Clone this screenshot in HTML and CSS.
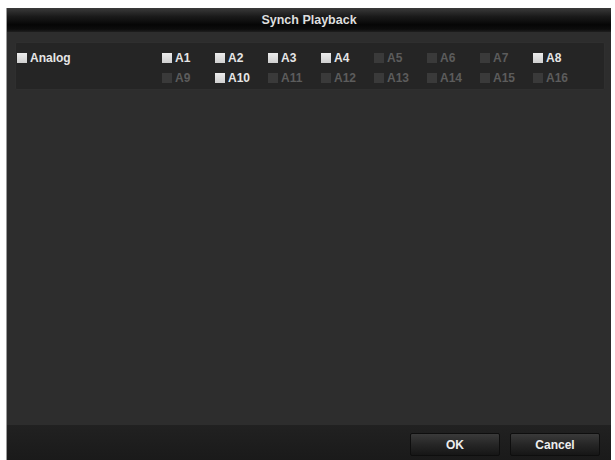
FILE: index.html
```html
<!DOCTYPE html>
<html>
<head>
<meta charset="utf-8">
<link rel="stylesheet" href="styles.css">
</head>
<body>
<div class="dialog">
  <div class="titlebar">Synch Playback</div>
  <div class="content">
    <div class="panel">
      <div class="group">
        <span class="cb on"></span><span class="lbl on">Analog</span>
      </div>
      <div class="grid">
        <div class="item"><span class="cb on"></span><span class="lbl on">A1</span></div>
        <div class="item"><span class="cb on"></span><span class="lbl on">A2</span></div>
        <div class="item"><span class="cb on"></span><span class="lbl on">A3</span></div>
        <div class="item"><span class="cb on"></span><span class="lbl on">A4</span></div>
        <div class="item"><span class="cb"></span><span class="lbl">A5</span></div>
        <div class="item"><span class="cb"></span><span class="lbl">A6</span></div>
        <div class="item"><span class="cb"></span><span class="lbl">A7</span></div>
        <div class="item"><span class="cb on"></span><span class="lbl on">A8</span></div>
        <div class="item"><span class="cb"></span><span class="lbl">A9</span></div>
        <div class="item"><span class="cb on"></span><span class="lbl on">A10</span></div>
        <div class="item"><span class="cb"></span><span class="lbl">A11</span></div>
        <div class="item"><span class="cb"></span><span class="lbl">A12</span></div>
        <div class="item"><span class="cb"></span><span class="lbl">A13</span></div>
        <div class="item"><span class="cb"></span><span class="lbl">A14</span></div>
        <div class="item"><span class="cb"></span><span class="lbl">A15</span></div>
        <div class="item"><span class="cb"></span><span class="lbl">A16</span></div>
      </div>
    </div>
  </div>
  <div class="footer">
    <button class="btn">OK</button>
    <button class="btn">Cancel</button>
  </div>
</div>
</body>
</html>
```
FILE: styles.css
```css
html, body {
  margin: 0;
  padding: 0;
  background: #ffffff;
}
body {
  font-family: "Liberation Sans", Arial, sans-serif;
  font-weight: bold;
  width: 615px;
  height: 460px;
  overflow: hidden;
}
.dialog {
  margin: 8px 0 0 7px;
  width: 604px;
  height: 452px;
  background: #2d2d2d;
  display: flex;
  flex-direction: column;
  box-shadow: -1px 0 0 #9a9a9a;
}
.titlebar {
  height: 24px;
  flex: none;
  display: flex;
  align-items: center;
  justify-content: center;
  color: #dedede;
  font-size: 12.5px;
  background: linear-gradient(#3a3a3a 0%, #1a1a1a 35%, #060606 70%, #0c0c0c 88%, #1e1e1e 100%);
}
.content {
  flex: 1;
  padding: 10px 6px 0 8px;
}
.panel {
  height: 48px;
  box-sizing: border-box;
  background: #252525;
  border: 1px solid #2f2f2f;
  border-radius: 2px;
  display: flex;
  padding: 5px 0 0 1px;
}
.group {
  width: 145px;
  height: 20px;
  display: flex;
  align-items: center;
}
.grid {
  display: grid;
  grid-template-columns: repeat(8, 53px);
  grid-auto-rows: 20px;
}
.item {
  display: flex;
  align-items: center;
}
.cb {
  width: 10px;
  height: 10px;
  background: #3a3a3a;
  flex: none;
}
.cb.on {
  background: linear-gradient(#ececec, #cfcfcf);
}
.lbl {
  margin-left: 3px;
  font-size: 12px;
  color: #5c5c5c;
}
.lbl.on {
  color: #e6e6e6;
}
.footer {
  height: 35px;
  flex: none;
  background: linear-gradient(#212121, #1a1a1a);
  display: flex;
  justify-content: flex-end;
  align-items: flex-start;
  gap: 10px;
  padding: 8px 11px 0 0;
  box-sizing: border-box;
}
.btn {
  width: 90px;
  height: 23px;
  border: 1px solid #0e0e0e;
  border-radius: 2px;
  background: linear-gradient(#3a3a3a 0%, #262626 50%, #161616 100%);
  color: #eeeeee;
  font-family: "Liberation Sans", Arial, sans-serif;
  font-weight: bold;
  font-size: 12px;
  padding: 0;
}
```
